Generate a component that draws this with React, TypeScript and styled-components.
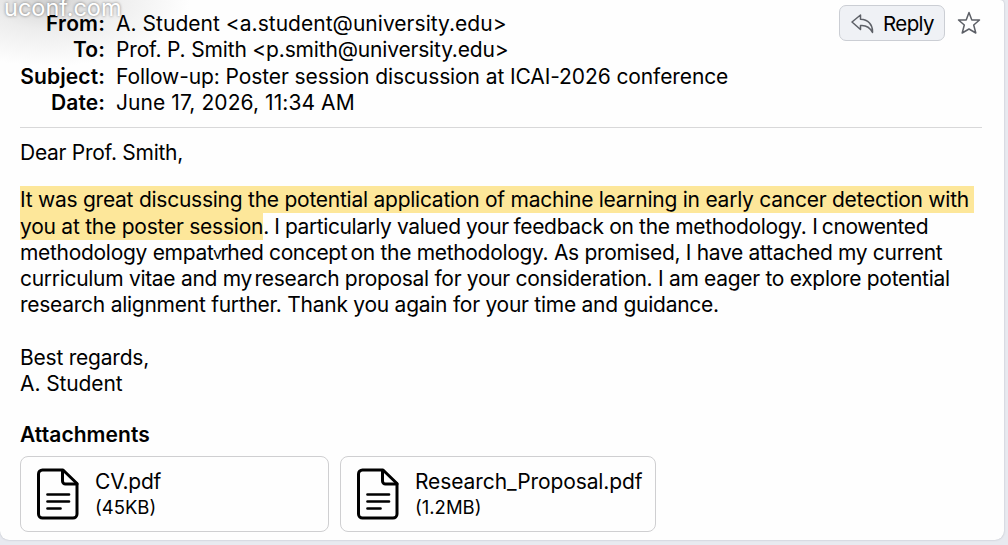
import React from "react";
import styled, { createGlobalStyle } from "styled-components";

const GlobalStyle = createGlobalStyle`
  * { box-sizing: border-box; }
  body {
    margin: 0;
    background: #e8eaf0;
    font-family: Inter, "Liberation Sans", sans-serif;
    color: #000;
    overflow: hidden;
  }
`;

const Page = styled.div`
  position: relative;
  height: 545px;
  padding-right: 4px;
  overflow: hidden;
`;

const Card = styled.main`
  height: 540px;
  padding: 11px 22px 0 20px;
  background: radial-gradient(ellipse 140px 66px at 50px 0, #d2d2d2 0%, rgba(234, 234, 234, 0.85) 45%, rgba(254, 254, 254, 0) 100%), #fefefe;
  border-radius: 0 4px 9px 9px;
  box-shadow: 0 0 2px #b0b4bd;
`;

const Watermark = styled.div`
  position: absolute;
  left: 4px;
  top: -6px;
  font-size: 23.5px;
  line-height: 28px;
  letter-spacing: 0;
  color: #fff;
  text-shadow: 0 0 3px rgba(0, 0, 0, 0.5);
`;

const Header = styled.header`
  display: flex;
  justify-content: space-between;
  height: 117px;
  border-bottom: 1px solid #d8d8d9;
`;

const Fields = styled.dl`
  display: grid;
  grid-template-columns: 85px auto;
  grid-auto-rows: 26.3px;
  align-content: start;
  column-gap: 11px;
  margin: 0;
  font-size: 21px;
  line-height: 26.3px;
  white-space: nowrap;
`;

const Label = styled.dt<{ $ls: number }>`
  font-weight: 600;
  text-align: right;
  letter-spacing: ${(p) => p.$ls}px;
`;

const Value = styled.dd<{ $ls: number }>`
  margin: 0;
  letter-spacing: ${(p) => p.$ls}px;
`;

const Actions = styled.div`
  display: flex;
  align-items: center;
  gap: 12px;
  height: 36px;
  margin: -6px 1px 0 0;
`;

const ReplyButton = styled.button`
  display: flex;
  align-items: center;
  gap: 9px;
  width: 106px;
  height: 36px;
  padding: 1px 0 0 11px;
  border: 1px solid #cbced4;
  border-radius: 7px;
  background: #eff1f5;
  color: #000;
  font: 400 20.5px/34px Inter, sans-serif;
  letter-spacing: -0.6px;
`;

const Body = styled.section`
  padding-top: 12px;
  font-size: 21px;
  line-height: 26.25px;
`;

const Line = styled.div<{ $gap?: number }>`
  display: flex;
  height: 26.25px;
  margin-top: ${(p) => p.$gap ?? 0}px;
  white-space: pre;
`;

const Run = styled.span<{ $ls: number; $ml?: number; $size?: number }>`
  font-size: ${(p) => p.$size ?? 21}px;
  letter-spacing: ${(p) => p.$ls}px;
  margin-left: ${(p) => p.$ml ?? 0}px;
`;

const Mark = styled(Run).attrs({ as: "mark" })<{ $pr?: number }>`
  height: 27px;
  margin-top: -1px;
  padding-top: 1px;
  padding-right: ${(p) => p.$pr ?? 0}px;
  background: #fde79a;
  color: inherit;
`;

const Heading = styled.h2`
  margin: 23px 0 0;
  font-size: 21px;
  line-height: 28px;
  font-weight: 600;
  letter-spacing: 0.07px;
`;

const Files = styled.div`
  display: flex;
  gap: 11px;
  margin-top: 7px;
`;

const File = styled.div<{ $w: number }>`
  display: flex;
  gap: 16px;
  width: ${(p) => p.$w}px;
  height: 76px;
  padding: 11px 0 0 16px;
  border: 1px solid #cfcfd1;
  border-radius: 8px;
`;

const FileName = styled.div<{ $ls: number }>`
  padding-top: 1px;
  font-size: 21px;
  line-height: 26px;
  letter-spacing: ${(p) => p.$ls}px;
`;

const FileSize = styled.div`
  font-size: 18.5px;
  line-height: 24px;
  letter-spacing: 0;
`;

const DocIcon = () => (
  <svg width="42" height="52" viewBox="0 0 42 52" fill="none" stroke="#000" strokeWidth="3" strokeLinejoin="round" strokeLinecap="round">
    <path d="M5.500 2H26L40 15.500V46a4 4 0 0 1-4 4H5.500a4 4 0 0 1-4-4V6a4 4 0 0 1 4-4Z" />
    <path d="M25.500 2.500V13a3 3 0 0 0 3 3H40" />
    <path d="M10.500 26.500H32M10.500 33.500H32M10.500 40.500H23.500" strokeWidth="2.700" />
  </svg>
);

const fields: [string, string, number, number][] = [
  ["From:", "A. Student <a.student@university.edu>", 0.15, 0.03],
  ["To:", "Prof. P. Smith <p.smith@university.edu>", 0.1, -0.17],
  ["Subject:", "Follow-up: Poster session discussion at ICAI-2026 conference", 0.1, -0.1],
  ["Date:", "June 17, 2026, 11:34 AM", 0.1, 0.08],
];

const files = [
  { name: "CV.pdf", size: "(45KB)", width: 309, ls: -0.2 },
  { name: "Research_Proposal.pdf", size: "(1.2MB)", width: 316, ls: -0.1 },
];

export default function App() {
  return (
    <Page>
      <GlobalStyle />
      <Card>
        <Header>
          <Fields>
            {fields.map(([label, value, labelSpacing, valueSpacing]) => (
              <React.Fragment key={label}>
                <Label $ls={labelSpacing}>{label}</Label>
                <Value $ls={valueSpacing}>{value}</Value>
              </React.Fragment>
            ))}
          </Fields>
          <Actions>
            <ReplyButton>
              <svg width="23" height="20" viewBox="0 0 23 20" fill="none" stroke="#5d6067" strokeWidth="1.500" strokeLinejoin="round">
                <path d="M9.500 1L1 8L9.500 15.500V11.500C15 11 19 13.500 21.500 18.500C22 10.500 17 5.500 9.500 5.200Z" />
              </svg>
              Reply
            </ReplyButton>
            <svg width="24" height="24" viewBox="0 0 24 24" fill="none" stroke="#5d6067" strokeWidth="1.500" strokeLinejoin="round">
              <path d="M12 1.500L14.800 9H22.500L16.700 14L18.800 22L12 18L5.200 22L7.300 14L1.500 9H9.200Z" />
            </svg>
          </Actions>
        </Header>
        <Body>
          <Line><Run $ls={-0.27}>Dear Prof. Smith,</Run></Line>
          <Line $gap={21}><Mark $ls={-0.25} $pr={5}>It was great discussing the potential application of machine learning in early cancer detection with</Mark></Line>
          <Line>
            <Mark $ls={-0.24}>you at the poster session</Mark>
            <Run $ls={-0.42}>. I particularly valued your </Run>
            <Run $ls={-0.34} $ml={-0.7}>feedback on the methodology. </Run>
            <Run $ls={-0.3}>I </Run>
            <Run $ls={-0.38} $ml={-1.3}>cnowented</Run>
          </Line>
          <Line>
            <Run $ls={-0.3}>methodology empa</Run>
            <Run $ls={-0.8}>t</Run>
            <Run $ls={-1.5} $size={16}>v</Run>
            <Run $ls={-1.3}>r</Run>
            <Run $ls={-0.38}>hed concept </Run>
            <Run $ls={-0.32} $ml={-2.3}>on the methodology. As promised, I have attached my current</Run>
          </Line>
          <Line>
            <Run $ls={-0.3}>curriculum vitae and my </Run>
            <Run $ls={-0.3} $ml={-3}>research proposal for your consideration. I am eager to explore potential</Run>
          </Line>
          <Line><Run $ls={-0.26}>research alignment further. Thank you again for your time and guidance.</Run></Line>
          <Line $gap={26.5}><Run $ls={-0.22}>Best regards,</Run></Line>
          <Line><Run $ls={-0.1}>A. Student</Run></Line>
        </Body>
        <Heading>Attachments</Heading>
        <Files>
          {files.map((f) => (
            <File key={f.name} $w={f.width}>
              <DocIcon />
              <div>
                <FileName $ls={f.ls}>{f.name}</FileName>
                <FileSize>{f.size}</FileSize>
              </div>
            </File>
          ))}
        </Files>
      </Card>
      <Watermark>uconf.com</Watermark>
    </Page>
  );
}
